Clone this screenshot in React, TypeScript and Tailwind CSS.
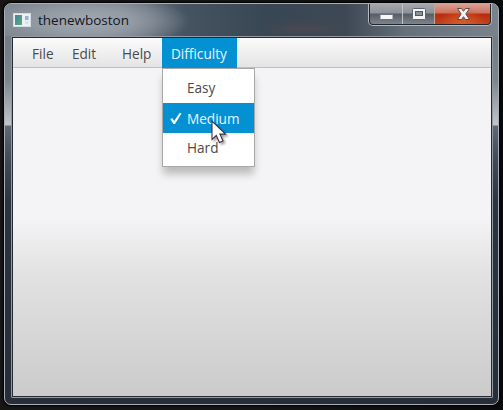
import React from "react";

const menus = [
  { label: "File", cls: "pl-[19px] w-[59px]" },
  { label: "Edit", cls: "w-[50px]" },
  { label: "Help", cls: "w-[40px]" },
];

function AppIcon() {
  return (
    <svg className="mt-[9px] ml-[8px] h-[14px] w-[18px] shrink-0" viewBox="0 0 18 14">
      <defs>
        <linearGradient id="tile" x1="0" y1="0" x2="1" y2="1">
          <stop offset="0" stopColor="#3f8796" />
          <stop offset="1" stopColor="#5fa783" />
        </linearGradient>
      </defs>
      <rect width="18" height="14" fill="#d5dce2" />
      <rect x="1" y="1" width="16" height="12" fill="#edf1f3" />
      <rect x="2" y="2" width="7" height="10" fill="url(#tile)" />
      <rect x="12" y="3" width="3.5" height="4" fill="#9cadd2" />
      <rect x="12" y="8" width="3.5" height="3" fill="#dce4e2" />
    </svg>
  );
}

function WindowButtons() {
  return (
    <div className="ml-auto mr-[6px] flex h-[22px] w-[124px] overflow-hidden rounded-b-[5px] border border-t-0 border-[#b5bbc1] bg-[#22262b] p-px pt-0">
      <div className="flex w-[33px] justify-center rounded-bl-[3px] border-r border-[#c0c4c8] bg-[linear-gradient(#a5a9ae_0,#8d9299_45%,#555c66_50%,#7d858f_100%)]">
        <svg className="h-[20px] w-[16px]" viewBox="0 0 16 20">
          <rect x="2" y="10.5" width="13" height="5" rx="0.5" fill="#f6f6f6" stroke="#6a707a" />
        </svg>
      </div>
      <div className="flex w-[32px] justify-center border-r border-[#c0a8a0] bg-[linear-gradient(#a5a9ae_0,#8d9299_45%,#555c66_50%,#7d858f_100%)]">
        <svg className="h-[20px] w-[16px]" viewBox="0 0 16 20">
          <rect x="1.5" y="4.5" width="13" height="11" rx="1" fill="#f4f4f4" stroke="#606670" />
          <rect x="4.5" y="7.5" width="7" height="4" fill="#8b9097" stroke="#505662" />
        </svg>
      </div>
      <div className="flex flex-1 justify-center rounded-br-[3px] bg-[radial-gradient(ellipse_at_50%_100%,#d95c2c_0,transparent_60%),linear-gradient(#dda092_0,#cc7361_45%,#b52c0b_50%,#c2431f_100%)]">
        <svg className="h-[20px] w-[16px]" viewBox="0 0 16 20">
          <path d="M2.5 4.5h4l2 2.8 2-2.8h4l-3.7 5.5 3.7 5.5h-4l-2-2.8-2 2.8h-4L6.2 10z" fill="#f7f4f3" stroke="#5e4b50" strokeLinejoin="round" />
        </svg>
      </div>
    </div>
  );
}

function Cursor() {
  return (
    <svg className="absolute left-[48px] top-[51px] h-[28px] w-[20px] drop-shadow-[2px_2px_1px_rgba(0,0,0,0.35)]" viewBox="0 0 20 28">
      <path d="M1 1v18.5l4.3-4 3.1 7 3.6-1.6-3.1-6.8h5.6z" fill="#fff" stroke="#3c3442" strokeWidth="1.1" />
    </svg>
  );
}

function DifficultyMenu() {
  return (
    <div className="absolute left-0 top-[30px] h-[99px] w-[93px] border border-[#a8a8a8] bg-white py-[4px] text-[#4a4a4a] shadow-[0_8px_8px_-1px_rgba(0,0,0,0.24)]">
      <div className="h-[30px] pl-[24px] leading-[30px]">Easy</div>
      <div className="flex h-[30px] items-center bg-[#0491d4] pl-[7px] text-[#e7f5fc]">
        <svg className="mr-[5px] h-[13px] w-[12px]" viewBox="0 0 12 13">
          <path d="M0.3 7.2 2.2 6l2 3L9.8.8l1.7.8L5 12H3.6z" fill="#fff" />
        </svg>
        Medium
      </div>
      <div className="h-[30px] pl-[24px] leading-[30px]">Hard</div>
      <Cursor />
    </div>
  );
}

export default function App() {
  return (
    <div className="h-[410px] w-[503px] overflow-hidden bg-[linear-gradient(90deg,#171516,#151515_50%,#090a0c)] pl-[4px] pt-[3px] font-['Open_Sans','Noto_Sans',sans-serif] text-[13.6px]">
      <div className="flex h-[402px] w-[495px] flex-col rounded-[7px] border border-[#a9afb5] bg-[linear-gradient(#7d858e_0,#747c85_35px,#7b838b_75px,#c2c6ca_121px,#626975_122px,#424957_155px,#2c3340_200px,#272d39_100%)] shadow-[0_0_2px_1px_#000]">
        <div className="flex h-[32px] shrink-0 rounded-t-[6px] bg-[radial-gradient(ellipse_105px_28px_at_80px_17px,#a3aab3_0,#929aa4_45%,transparent_100%),radial-gradient(ellipse_45px_8px_at_300px_25px,#4b4951,transparent),linear-gradient(90deg,#7b838c_0,#737c86_120px,#465361_180px,#394653_260px,#3d4854_340px,#65707b_400px,#7a838c_100%)]">
          <AppIcon />
          <span className="ml-[7px] mt-[6px] text-[13.5px] leading-[20px] text-[#14171b]">thenewboston</span>
          <WindowButtons />
        </div>
        <div className="ml-[6px] h-[362px] w-[482px] rounded-[1px] border border-[#929aa1]">
          <div className="h-full w-full border border-[#252b34] bg-[linear-gradient(#f4f4f6_0,#f4f4f6_180px,#e2e2e2_235px,#cbcbcb_100%)]">
            <div className="flex h-[30px] border-b border-[#bfbfbf] bg-[linear-gradient(#fbfbfb,#e4e4e5)] leading-[31px] text-[#4a4a4a]">
              {menus.map((m) => (
                <div key={m.label} className={m.cls}>{m.label}</div>
              ))}
              <div className="relative h-[30px] w-[75px] bg-[#0491d4] pl-[9px] text-[#e7f5fc]">
                Difficulty
                <DifficultyMenu />
              </div>
            </div>
          </div>
        </div>
      </div>
    </div>
  );
}
